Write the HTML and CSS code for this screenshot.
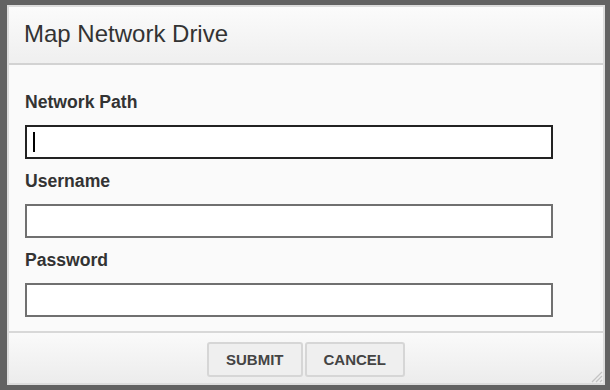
FILE: index.html
```html
<!DOCTYPE html>
<html lang="en">

<head>
  <meta charset="UTF-8" />
  <meta name="viewport" content="width=device-width, initial-scale=1.0" />
  <title>Map Network Drive</title>
  <link rel="stylesheet" href="styles.css">
</head>

<body>
  <div class="dialog">
    <div class="dialog-header">
      <h1>Map Network Drive</h1>
    </div>
    <div class="dialog-body">
      <label class="field-label">Network Path</label>
      <div class="field-input focused"><span class="caret"></span></div>
      <label class="field-label">Username</label>
      <div class="field-input"></div>
      <label class="field-label">Password</label>
      <div class="field-input"></div>
    </div>
    <div class="dialog-footer">
      <button class="btn">SUBMIT</button>
      <button class="btn">CANCEL</button>
    </div>
    <svg class="grip" width="14" height="14" viewBox="0 0 14 14">
      <path d="M13 3 L3 13 M13 7 L7 13 M13 11 L11 13" stroke="#c4c4c4" stroke-width="1.2" />
    </svg>
  </div>
</body>

</html>
```

FILE: styles.css
```css
body {
  margin: 0;
  padding: 5px 0 0 7px;
  height: 390px;
  box-sizing: border-box;
  background-color: #626262;
  font-family: "Liberation Sans", Arial, sans-serif;
  color: #333;
  overflow: hidden;
}

.dialog {
  position: relative;
  width: 598px;
  height: 380px;
  box-sizing: border-box;
  border: 2px solid #dcdcdc;
  background: #fafafa;
  display: flex;
  flex-direction: column;
}

.dialog-header {
  height: 56px;
  padding-left: 15px;
  border-bottom: 2px solid #d2d2d2;
  background: linear-gradient(#fbfbfb, #efefef);
}

.dialog-header h1 {
  margin: 0;
  font-size: 24px;
  font-weight: normal;
  line-height: 54px;
  color: #333;
}

.dialog-body {
  padding: 27px 0 2px 16px;
  display: flex;
  flex-direction: column;
  background: #fafafa;
}

.field-label {
  font-size: 17.6px;
  font-weight: bold;
  line-height: 20px;
  margin-bottom: 13px;
  color: #333;
}

.field-input {
  width: 528px;
  height: 34px;
  box-sizing: border-box;
  border: 2px solid #707070;
  background: #fff;
  margin-bottom: 12px;
  display: flex;
  align-items: center;
}

.field-input.focused {
  border-color: #222;
}

.caret {
  width: 2px;
  height: 20px;
  margin-left: 6px;
  background: #000;
}

.dialog-footer {
  flex: 1;
  border-top: 2px solid #d8d8d8;
  background: linear-gradient(#fafafa, #ececec);
  display: flex;
  justify-content: center;
  align-items: flex-start;
  gap: 2px;
  padding-top: 9px;
}

.btn {
  height: 35px;
  padding: 0 17px;
  border: 2px solid #d6d6d6;
  border-radius: 3px;
  background: #efefef;
  font-family: "Liberation Sans", Arial, sans-serif;
  font-size: 15px;
  font-weight: bold;
  color: #444;
}

.grip {
  position: absolute;
  right: 0;
  bottom: 0;
}
```
